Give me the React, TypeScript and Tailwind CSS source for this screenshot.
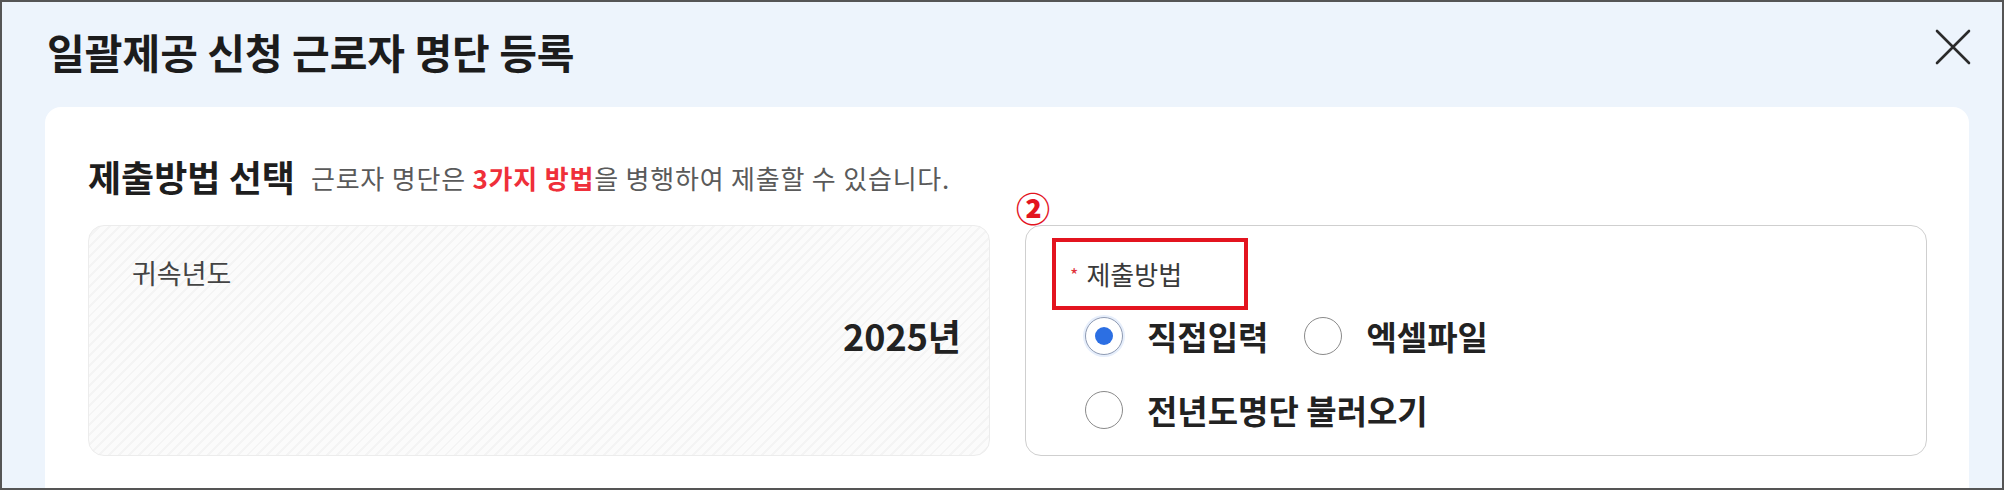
import React from 'react';

const font = { fontFamily: '"Noto Sans CJK KR", "Noto Sans", sans-serif' };

const Radio = ({ checked }: { checked?: boolean }) =>
  checked ? (
    <span className="flex h-[38px] w-[38px] shrink-0 items-center justify-center rounded-full border-[1.5px] border-[#8f9bb3] bg-white shadow-[0_0_0_2px_#e6eefb]">
      <span className="h-[18px] w-[18px] rounded-full bg-[#2c6fe3]" />
    </span>
  ) : (
    <span className="h-[38px] w-[38px] shrink-0 rounded-full border-[1.5px] border-[#8a8a8a] bg-white" />
  );

const Option = ({ label, checked }: { label: string; checked?: boolean }) => (
  <label className="flex items-center gap-[24px]">
    <Radio checked={checked} />
    <span className="text-[33px] font-semibold leading-none text-[#222]">{label}</span>
  </label>
);

export default function App() {
  return (
    <div
      style={font}
      className="flex h-[490px] w-[2004px] flex-col overflow-hidden border-2 border-[#555] bg-[#edf4fc]"
    >
      {/* header */}
      <div className="flex h-[98px] shrink-0 items-center justify-between pl-[45px] pr-[30px]">
        <h1 className="text-[41px] font-bold leading-none text-[#1c1c1c]">
          일괄제공 신청 근로자 명단 등록
        </h1>
        <svg width="38" height="38" viewBox="0 0 38 38" className="mt-[-8px]">
          <path d="M3 3 L35 35 M35 3 L3 35" stroke="#2b2b2b" strokeWidth="2.6" strokeLinecap="round" />
        </svg>
      </div>

      {/* card */}
      <div className="ml-[43px] mr-[33px] mt-[7px] flex-1 rounded-t-[16px] bg-white pl-[43px] pr-[42px] pt-[49px]">
        <div className="flex h-[40px] items-center">
          <span className="text-[36px] font-bold leading-none text-[#1e1e1e]">제출방법 선택</span>
          <span className="ml-[16px] mt-[4px] text-[26px] leading-none tracking-[0.8px] text-[#5a5a5a]">
            근로자 명단은 <b className="font-bold text-[#ef2f3a]">3가지 방법</b>을 병행하여 제출할 수 있습니다.
          </span>
        </div>

        <div className="mt-[29px] grid h-[231px] grid-cols-2 gap-[35px]">
          {/* 귀속년도 */}
          <div className="flex flex-col rounded-[16px] border border-[#ececec] bg-[repeating-linear-gradient(135deg,#f4f4f4_0px,#f4f4f4_2px,#fbfbfb_2px,#fbfbfb_7px)] pl-[43px] pr-[28px] pt-[29px]">
            <span className="text-[27px] leading-[36px] text-[#444]">귀속년도</span>
            <span className="mt-[26px] self-end text-[36px] font-semibold leading-none text-[#222]">2025년</span>
          </div>

          {/* 제출방법 */}
          <div className="relative rounded-[16px] border-[1.5px] border-[#cfcfcf] bg-white pl-[26px] pt-[12px]">
            <span className="absolute left-[-10px] top-[-35px] text-[34px] font-black leading-none text-[#e3141f]">②</span>
            <div className="flex h-[72px] w-[196px] items-center border-4 border-[#e3141f] pl-[14px]">
              <span className="mr-[8px] text-[18px] leading-none text-[#e0333b]">*</span>
              <span className="text-[26px] leading-none text-[#3a3a3a]">제출방법</span>
            </div>
            <div className="ml-[33px] flex flex-col gap-[22px]">
              <div className="flex h-[52px] items-center gap-[36px]">
                <Option label="직접입력" checked />
                <Option label="엑셀파일" />
              </div>
              <div className="flex h-[52px] items-center">
                <Option label="전년도명단 불러오기" />
              </div>
            </div>
          </div>
        </div>
      </div>
    </div>
  );
}
